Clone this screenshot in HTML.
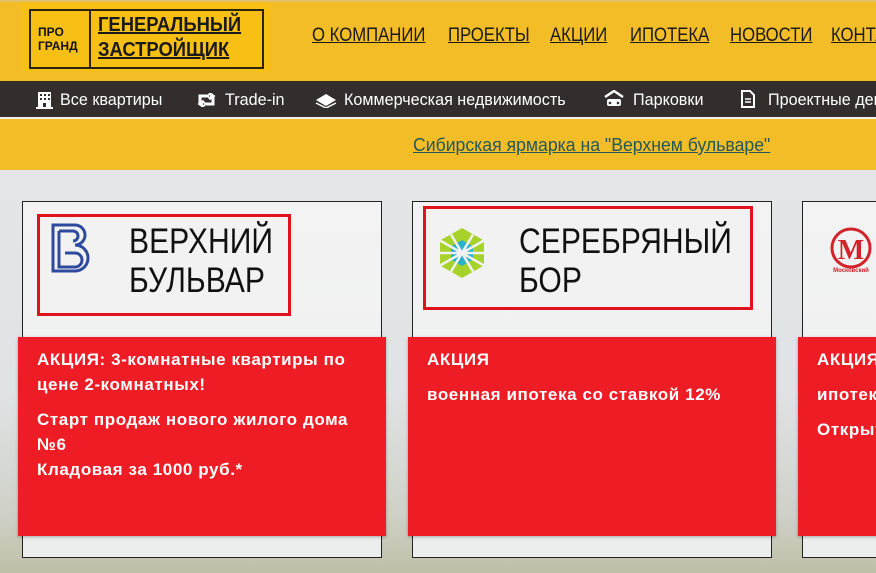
<!DOCTYPE html>
<html><head><meta charset="utf-8"><style>
*{margin:0;padding:0;box-sizing:border-box}
body{width:876px;height:573px;overflow:hidden;position:relative;font-family:"Liberation Sans",sans-serif;background:#f3bd27}
.hdr{position:absolute;left:0;top:0;width:876px;height:81px;background:#f3bd27;border-top:2px solid #e2c06a}
.logo{position:absolute;left:22px;top:3px;width:248px;height:68px;background:#f8bf14}
.lbox{position:absolute;left:29px;top:9px;width:235px;height:60px;border:2px solid #2b2412}
.lbox .sep{position:absolute;left:58px;top:0;bottom:0;border-left:2px solid #2b2412}
.pro{position:absolute;left:7px;top:14px;font:bold 12px/14px "Liberation Sans",sans-serif;color:#111}
.gen{position:absolute;left:67px;top:2px;font:bold 20px/25px "Liberation Sans",sans-serif;color:#1a1a1a;text-decoration:underline;transform:scaleX(0.92);transform-origin:left;white-space:nowrap}
.nav span{position:absolute;top:25px;font-size:19px;color:#1a1a1a;text-decoration:underline;white-space:nowrap;transform:scaleX(0.88);transform-origin:left}
.bar{position:absolute;left:0;top:81px;width:876px;height:38px;background:#332e2c;border-bottom:2px solid #eee}
.bar .t{position:absolute;top:9px;color:#fff;font-size:17px;white-space:nowrap;transform:scaleX(0.95);transform-origin:left}
.bar svg{position:absolute}
.strip{position:absolute;left:0;top:121px;width:876px;height:49px;background:#f3bd27}
.strip a{position:absolute;left:413px;top:14px;color:#24585a;font-size:18px;text-decoration:underline;white-space:nowrap;transform:scaleX(0.98);transform-origin:left}
.main{position:absolute;left:0;top:170px;width:876px;height:403px;background:linear-gradient(180deg,#e4e6e8 0%,#e0e3e5 55%,#cfd1c8 85%,#bfbfa6 100%)}
.card{position:absolute;top:201px;width:360px;height:357px;border:1px solid #222;background:linear-gradient(180deg,#f3f3f3,#eceeed)}
.rb{position:absolute;border:3px solid #e0121c;background:#f2f2f2}
.ttl{position:absolute;font-size:35px;line-height:39px;color:#111;white-space:nowrap;transform:scaleX(0.86);transform-origin:left}
.red{position:absolute;top:337px;height:199px;background:#ee1c25;color:#fff;font:bold 17px/25px "Liberation Sans",sans-serif;letter-spacing:0.6px;padding:10px 19px;box-shadow:0 1px 3px rgba(0,0,0,.3)}
.red p{margin-bottom:10px}
</style></head><body>
<div class="hdr"></div>
<div class="logo"></div>
<div class="lbox"><div class="sep"></div><div class="pro">ПРО<br>ГРАНД</div><div class="gen">ГЕНЕРАЛЬНЫЙ<br>ЗАСТРОЙЩИК</div></div>
<div class="nav"><span style="left:312px">О КОМПАНИИ</span><span style="left:448px">ПРОЕКТЫ</span><span style="left:550px">АКЦИИ</span><span style="left:630px">ИПОТЕКА</span><span style="left:730px">НОВОСТИ</span><span style="left:831px">КОНТАКТЫ</span></div>
<div class="bar">
<svg style="left:36px;top:10px" width="17" height="18" viewBox="0 0 17 18"><rect x="2" y="1" width="13" height="15" fill="#fff"/><g fill="#332e2c"><rect x="4" y="3" width="2" height="2"/><rect x="8" y="3" width="2" height="2"/><rect x="12" y="3" width="2" height="2"/><rect x="4" y="7" width="2" height="2"/><rect x="8" y="7" width="2" height="2"/><rect x="12" y="7" width="2" height="2"/><rect x="7" y="12" width="3" height="4"/></g><rect x="0" y="16" width="17" height="2" fill="#fff"/></svg>
<div class="t" style="left:60px">Все квартиры</div>
<svg style="left:196px;top:12px" width="21" height="14" viewBox="0 0 21 14"><path d="M4 12V3h9M13 0l4 3-4 3M17 2v9H8M8 8l-4 3 4 3" fill="none" stroke="#fff" stroke-width="3"/></svg>
<div class="t" style="left:225px">Trade-in</div>
<svg style="left:315px;top:11px" width="22" height="16" viewBox="0 0 22 16"><path d="M1 8l10-6 10 6-10 6z" fill="#fff"/><path d="M1 11l10 5 10-5" stroke="#fff" stroke-width="1.5" fill="none"/></svg>
<div class="t" style="left:344px">Коммерческая недвижимость</div>
<svg style="left:604px;top:9px" width="20" height="19" viewBox="0 0 20 19"><path d="M1 7l9-6 9 6" stroke="#fff" stroke-width="2.5" fill="none"/><rect x="3" y="9" width="14" height="7" rx="2" fill="#fff"/><circle cx="6" cy="13" r="1.3" fill="#332e2c"/><circle cx="14" cy="13" r="1.3" fill="#332e2c"/></svg>
<div class="t" style="left:633px">Парковки</div>
<svg style="left:740px;top:9px" width="16" height="19" viewBox="0 0 16 19"><path d="M2 1h8l4 4v12H2z" fill="none" stroke="#fff" stroke-width="2"/><path d="M5 9h6M5 12h6" stroke="#fff" stroke-width="1.5"/></svg>
<div class="t" style="left:768px">Проектные декларации</div>
</div>
<div class="strip"><a>Сибирская ярмарка на "Верхнем бульваре"</a></div>
<div class="main"></div>

<div class="card" style="left:22px"></div>
<div class="rb" style="left:37px;top:214px;width:254px;height:102px"></div>
<svg style="position:absolute;left:50px;top:222px" width="42" height="54" viewBox="0 0 42 54"><g fill="none" stroke="#2d4a9e" stroke-width="3"><path d="M3 3h22a10 10 0 0 1 0 20h0a12 12 0 0 1 0 26H3z"/><path d="M9 9h14a5 5 0 0 1 0 10M9 9v36h16a7 7 0 0 0 0-14"/><path d="M15 31h10"/></g></svg>
<div class="ttl" style="left:129px;top:222px">ВЕРХНИЙ<br>БУЛЬВАР</div>
<div class="red" style="left:18px;width:368px"><p>АКЦИЯ: 3-комнатные квартиры по цене 2-комнатных!</p><p>Старт продаж нового жилого дома №6<br>Кладовая за 1000 руб.*</p></div>

<div class="card" style="left:412px"></div>
<div class="rb" style="left:423px;top:206px;width:330px;height:104px"></div>
<svg style="position:absolute;left:436px;top:227px" width="52" height="52" viewBox="0 0 52 52"><polygon points="26,1 48,13.5 48,38.5 26,51 4,38.5 4,13.5" fill="#a6d22a"/><polygon points="26,13 37,19.5 37,32.5 26,39 15,32.5 15,19.5" fill="#2ab0c9"/><g stroke="#f2f2f2" stroke-width="2.5"><path d="M4 13.5L48 38.5M48 13.5L4 38.5M4 26h44M15 7.5L37 44.5M37 7.5L15 44.5"/></g></svg>
<div class="ttl" style="left:519px;top:222px">СЕРЕБРЯНЫЙ<br>БОР</div>
<div class="red" style="left:408px;width:368px"><p>АКЦИЯ</p><p>военная ипотека со ставкой 12%</p></div>

<div class="card" style="left:802px"></div>
<svg style="position:absolute;left:826px;top:226px" width="50" height="50" viewBox="0 0 50 50"><circle cx="25" cy="22" r="19" fill="none" stroke="#d2232a" stroke-width="3"/><text x="25" y="33" text-anchor="middle" font-family="Liberation Serif" font-weight="bold" font-size="28" fill="#d2232a">M</text><text x="25" y="46" text-anchor="middle" font-family="Liberation Sans" font-weight="bold" font-size="6" fill="#d2232a">Московский</text></svg>
<div class="red" style="left:798px;width:100px"><p>АКЦИЯ</p><p>ипотека</p><p>Открыт</p></div>
</body></html>
